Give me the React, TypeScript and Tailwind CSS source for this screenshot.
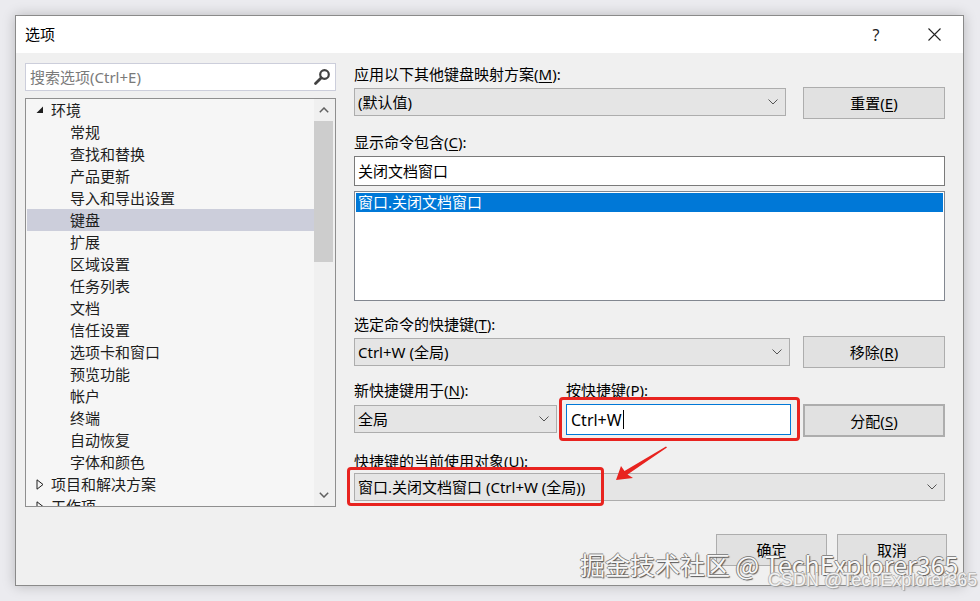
import React from "react";

const Chevron = () => (
  <svg width="10" height="6" viewBox="0 0 10 6" className="shrink-0">
    <path d="M0.5 0.5 L5 5 L9.5 0.5" fill="none" stroke="#555" strokeWidth="1" />
  </svg>
);

const Combo = ({ children, className = "" }: { children: React.ReactNode; className?: string }) => (
  <div
    className={
      "h-[28px] border border-[#adadad] bg-[#e5e5e5] flex items-center justify-between pl-[3px] pr-[7px] text-[15px] text-black leading-[20px] " +
      className
    }
  >
    <span className="whitespace-nowrap">{children}</span>
    <Chevron />
  </div>
);

const Btn = ({ children, className = "" }: { children: React.ReactNode; className?: string }) => (
  <div
    className={
      "border border-[#adadad] bg-[#e1e1e1] flex items-center justify-center text-[15px] text-black leading-[20px] " +
      className
    }
  >
    {children}
  </div>
);

const U = ({ children }: { children: React.ReactNode }) => (
  <span className="underline underline-offset-[2px] decoration-1">{children}</span>
);

const treeChildren = [
  "常规",
  "查找和替换",
  "产品更新",
  "导入和导出设置",
  "键盘",
  "扩展",
  "区域设置",
  "任务列表",
  "文档",
  "信任设置",
  "选项卡和窗口",
  "预览功能",
  "帐户",
  "终端",
  "自动恢复",
  "字体和颜色",
];

const Expanded = () => (
  <svg width="8" height="8" viewBox="0 0 8 8" className="shrink-0">
    <polygon points="7,0.5 7,7 0.5,7" fill="#1e1e1e" />
  </svg>
);

const Collapsed = () => (
  <svg width="8" height="11" viewBox="0 0 8 11" className="shrink-0">
    <polygon points="1,0.8 7,5.5 1,10.2" fill="none" stroke="#1e1e1e" strokeWidth="1" />
  </svg>
);

export default function App() {
  return (
    <div className="relative w-[980px] h-[601px] overflow-hidden bg-[#ebebef] pt-[15px] pl-[15px] font-['Noto_Sans','Noto_Sans_CJK_SC',sans-serif]">
      {/* Dialog */}
      <div className="w-[949px] h-[571px] border border-[#8a8a8a] bg-[#f0f0f0] flex flex-col shadow-[0_0_12px_rgba(0,0,0,0.22)]">
        {/* Title bar */}
        <div className="h-[37px] bg-white flex items-center pl-[9px] pr-[6px]">
          <span className="text-[15px] leading-[20px] text-black -mt-[1px]">选项</span>
          <div className="ml-auto flex items-center gap-[12px]">
            <div className="w-[46px] h-[30px] flex items-center justify-center text-[16px] text-[#222] leading-[20px]">?</div>
            <div className="w-[46px] h-[30px] flex items-center justify-center">
              <svg width="13" height="13" viewBox="0 0 13 13">
                <path d="M0.5 0.5 L12.5 12.5 M12.5 0.5 L0.5 12.5" stroke="#222" strokeWidth="1.1" />
              </svg>
            </div>
          </div>
        </div>

        {/* Body */}
        <div className="flex-1 flex pl-[9px] pt-[10px]">
          {/* Left column */}
          <div className="w-[311px] flex flex-col">
            <div className="h-[28px] bg-white border border-[#cccedb] flex items-center pl-[4px] pr-[4px]">
              <span className="text-[15px] leading-[20px] text-[#7a7a7a]">搜索选项(Ctrl+E)</span>
              <svg width="18" height="18" viewBox="0 0 18 18" className="ml-auto">
                <circle cx="11.5" cy="6.5" r="4.3" fill="none" stroke="#424242" strokeWidth="2.2" />
                <path d="M8.3 9.7 L2.5 15.5" stroke="#424242" strokeWidth="2.8" strokeLinecap="round" />
              </svg>
            </div>
            <div className="mt-[7px] h-[409px] border border-[#8f8f8f] bg-[#f6f6f6] flex overflow-hidden">
              <div className="flex-1 pl-[1px] overflow-hidden">
                <div className="h-[22px] flex items-center pl-[9px] gap-[7px] text-[15px] text-[#1e1e1e] leading-[20px]">
                  <Expanded />
                  <span>环境</span>
                </div>
                {treeChildren.map((t) => (
                  <div
                    key={t}
                    className={
                      "h-[22px] flex items-center pl-[43px] text-[15px] text-[#1e1e1e] leading-[20px] " +
                      (t === "键盘" ? "bg-[#cccedb]" : "")
                    }
                  >
                    {t}
                  </div>
                ))}
                <div className="h-[22px] flex items-center pl-[9px] gap-[7px] text-[15px] text-[#1e1e1e] leading-[20px]">
                  <Collapsed />
                  <span>项目和解决方案</span>
                </div>
                <div className="h-[22px] flex items-center pl-[9px] gap-[7px] text-[15px] text-[#1e1e1e] leading-[20px]">
                  <Collapsed />
                  <span>工作项</span>
                </div>
              </div>
              {/* Scrollbar */}
              <div className="w-[21px] flex flex-col bg-[#f0f0f0] pr-[2px]">
                <div className="h-[22px] flex items-center justify-center">
                  <svg width="10" height="6" viewBox="0 0 10 6">
                    <path d="M0.8 5.2 L5 1 L9.2 5.2" fill="none" stroke="#606060" strokeWidth="1.5" />
                  </svg>
                </div>
                <div className="h-[141px] bg-[#cdcdcd]" />
                <div className="flex-1" />
                <div className="h-[22px] flex items-center justify-center">
                  <svg width="10" height="6" viewBox="0 0 10 6">
                    <path d="M0.8 0.8 L5 5 L9.2 0.8" fill="none" stroke="#606060" strokeWidth="1.5" />
                  </svg>
                </div>
              </div>
            </div>
          </div>

          {/* Right column */}
          <div className="ml-[18px] w-[591px] flex flex-col text-[15px] leading-[20px] text-black">
            <div className="mt-[1px] h-[20px]">
              应用以下其他键盘映射方案(<U>M</U>):
            </div>
            <div className="mt-[3px] h-[32px] flex items-start">
              <Combo className="w-[432px] mt-[1px]">(默认值)</Combo>
              <Btn className="ml-[17px] w-[142px] h-[32px]">
                重置(<U>E</U>)
              </Btn>
            </div>

            <div className="mt-[13px] h-[20px]">
              显示命令包含(<U>C</U>):
            </div>
            <div className="mt-[4px] h-[30px] bg-white border border-[#7a7a7a] flex items-center pl-[3px]">
              关闭文档窗口
            </div>
            <div className="mt-[5px] h-[110px] bg-white border border-[#828790] p-[1px]">
              <div className="h-[19px] bg-[#0078d7] text-white flex items-center pl-[2px] leading-[19px]">
                窗口.关闭文档窗口
              </div>
            </div>

            <div className="mt-[13px] h-[20px]">
              选定命令的快捷键(<U>T</U>):
            </div>
            <div className="mt-[2px] h-[32px] flex items-start">
              <Combo className="w-[436px] mt-[2px]">Ctrl+W (全局)</Combo>
              <Btn className="ml-[13px] w-[142px] h-[32px]">
                移除(<U>R</U>)
              </Btn>
            </div>

            <div className="mt-[12px] h-[20px] flex">
              <div className="w-[212px]">
                新快捷键用于(<U>N</U>):
              </div>
              <div>
                按快捷键(<U>P</U>):
              </div>
            </div>
            <div className="mt-[4px] h-[33px] flex items-start">
              <Combo className="w-[203px] mt-[1px]">全局</Combo>
              <div className="relative ml-[9px] w-[225px] h-[31px]">
                <div className="h-full bg-white border border-[#0078d7] flex items-center pl-[4px] text-[16px]">
                  <span>Ctrl+W</span>
                  <span className="inline-block w-[1px] h-[19px] bg-black ml-[1px]" />
                </div>
                <div className="absolute left-[-7px] right-[-9px] top-[-7px] bottom-[-6px] border-[3px] border-[#e8231f] rounded-[4px]" />
              </div>
              <Btn className="ml-[12px] w-[142px] h-[33px] border-2 border-[#0078d7]">
                分配(<U>S</U>)
              </Btn>
            </div>

            <div className="mt-[14px] h-[20px]">
              快捷键的当前使用对象(<U>U</U>):
            </div>
            <div className="relative mt-[2px]">
              <Combo className="w-[591px] pr-[5px]">窗口.关闭文档窗口 (Ctrl+W (全局))</Combo>
              <div className="absolute left-[-7px] w-[257px] top-[-6px] h-[39px] border-[3px] border-[#e8231f] rounded-[4px]" />
            </div>

            <div className="mt-[33px] flex justify-end mr-[-2px]">
              <Btn className="w-[111px] h-[32px]">确定</Btn>
              <Btn className="ml-[10px] w-[110px] h-[32px]">取消</Btn>
            </div>
          </div>
        </div>
      </div>

      {/* Red arrow annotation */}
      <svg className="absolute left-[600px] top-[435px]" width="80" height="56" viewBox="0 0 80 56">
        <polygon
          points="16,45 33,43 27.5,39.5 67,12.5 66,11.5 24.5,36 21,31"
          fill="#e8231f"
        />
      </svg>

      {/* Watermarks */}
      <div className="absolute left-[580px] top-[548px] text-[25px] leading-[33px] whitespace-nowrap text-[#f7f7f7] font-['Noto_Sans_CJK_SC',sans-serif] [text-shadow:1px_1px_1px_#555,-1px_0_0_#888,0_-1px_0_#888]">
        掘金技术社区 @ TechExplorer365
      </div>
      <div className="absolute left-[768px] top-[569px] text-[18px] leading-[22px] whitespace-nowrap text-[#f2f2f2] font-['Liberation_Sans',sans-serif] [text-shadow:1px_1px_1px_#999,-1px_0_0_#bbb,0_-1px_0_#bbb]">
        CSDN @TechExplorer365
      </div>
    </div>
  );
}
